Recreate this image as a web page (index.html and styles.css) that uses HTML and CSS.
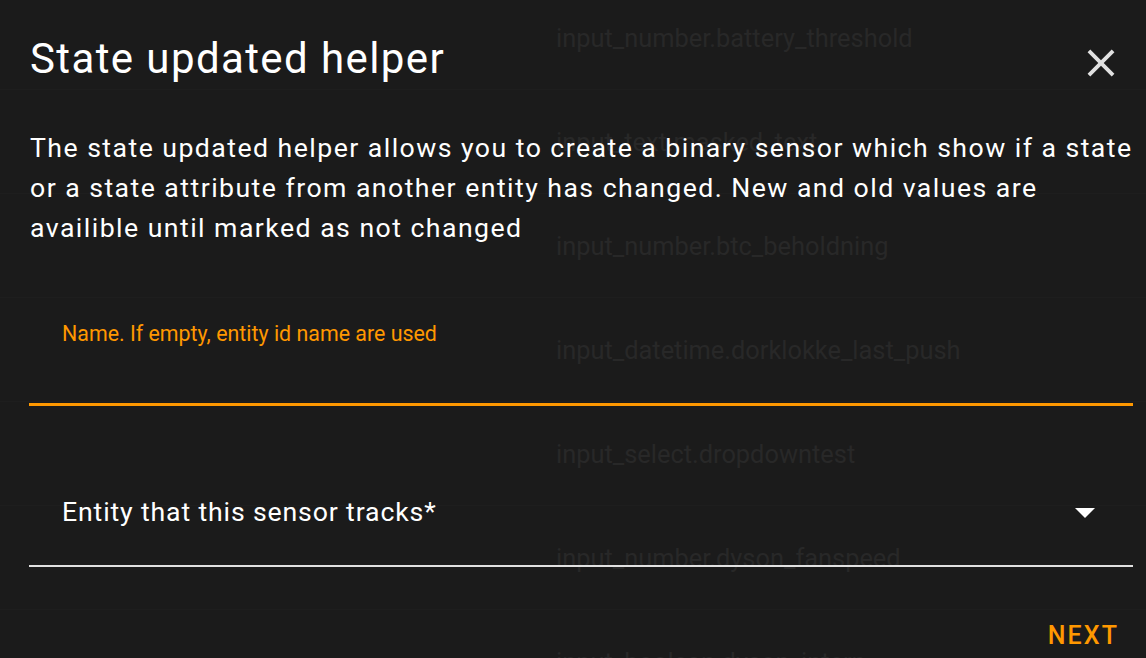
FILE: index.html
```html
<!DOCTYPE html>
<html lang="en">
<head>
<meta charset="utf-8">
<title>State updated helper</title>
<link rel="stylesheet" href="styles.css">
</head>
<body>
<ul class="ghost-list">
  <li class="ghost-row">input_number.battery_threshold</li>
  <li class="ghost-row">input_text.masked_text</li>
  <li class="ghost-row">input_number.btc_beholdning</li>
  <li class="ghost-row">input_datetime.dorklokke_last_push</li>
  <li class="ghost-row">input_select.dropdowntest</li>
  <li class="ghost-row">input_number.dyson_fanspeed</li>
  <li class="ghost-row">input_boolean.dyson_intern</li>
</ul>
<div class="dialog">
  <div class="header">
    <h1 class="title">State updated helper</h1>
    <button class="close" aria-label="Close">
      <svg viewBox="0 0 24 24" width="46" height="46"><path fill="currentColor" d="M19,6.41L17.59,5L12,10.59L6.41,5L5,6.41L10.59,12L5,17.59L6.41,19L12,13.41L17.59,19L19,17.59L13.41,12L19,6.41Z"/></svg>
    </button>
  </div>
  <p class="desc">The state updated helper allows you to create a binary sensor which show if a state or a state attribute from another entity has changed. New and old values are availible until marked as not changed</p>
  <div class="field">
    <div class="field-label">Name. If empty, entity id name are used</div>
    <div class="field-input"></div>
    <div class="field-line"></div>
  </div>
  <div class="select">
    <div class="select-row">
      <span class="select-label">Entity that this sensor tracks*</span>
      <svg class="arrow" viewBox="0 0 24 24" width="48" height="48"><path fill="currentColor" d="M7,10L12,15L17,10H7Z"/></svg>
    </div>
    <div class="select-line"></div>
  </div>
  <div class="footer">
    <button class="next">NEXT</button>
  </div>
</div>
</body>
</html>
```

FILE: styles.css
```css
* { box-sizing: border-box; }
html, body { margin: 0; padding: 0; }
body {
  width: 1146px;
  height: 658px;
  overflow: hidden;
  background: #1b1b1b;
  font-family: Roboto, "Noto Sans", "Liberation Sans", sans-serif;
  color: #e1e1e1;
  position: relative;
}
.ghost-list {
  list-style: none;
  margin: 0;
  padding: 0;
  height: 658px;
  overflow: hidden;
}
.ghost-row {
  height: 104px;
  display: flex;
  align-items: center;
  padding-left: 556px;
  font-size: 25.4px;
  color: #282828;
  border-bottom: 1px solid #1e1e1e;
}
.ghost-row:first-child {
  margin-top: -14px;
}
.dialog {
  position: absolute;
  inset: 0;
  padding: 0 13px 0 29px;
  display: flex;
  flex-direction: column;
}
.header {
  display: flex;
  align-items: flex-start;
  justify-content: space-between;
  padding-top: 35px;
}
.title {
  margin: 0;
  font-size: 42px;
  line-height: 48px;
  font-weight: 400;
  letter-spacing: 1.4px;
  color: #ffffff;
  padding-left: 1px;
}
.close {
  background: none;
  border: 0;
  padding: 0;
  margin: 5px 9px 0 0;
  color: #e1e1e1;
  display: block;
  width: 46px;
  height: 46px;
}
.close svg { display: block; }
.desc {
  margin: 42px -13px 0 0;
  font-size: 26.67px;
  line-height: 40px;
  letter-spacing: 1.45px;
  padding-left: 1px;
  color: #ffffff;
}
.field {
  margin-top: 73px;
}
.field-label {
  padding-left: 33px;
  font-size: 21.4px;
  line-height: 26px;
  color: #ff9800;
}
.field-input { height: 56px; }
.field-line {
  height: 3px;
  background: #ff9800;
}
.select {
  margin-top: 82px;
}
.select-row {
  display: flex;
  align-items: center;
  justify-content: space-between;
  height: 48px;
  padding-left: 33px;
  padding-right: 24px;
}
.select-label {
  font-size: 26.67px;
  line-height: 32px;
  letter-spacing: 0.85px;
  color: #ffffff;
}
.arrow { color: #ffffff; display: block; }
.select-line {
  margin-top: 29px;
  height: 2px;
  background: #e1e1e1;
}
.footer {
  display: flex;
  justify-content: flex-end;
  margin-top: 54px;
}
.next {
  background: none;
  border: 0;
  padding: 0;
  margin-right: 14px;
  font-family: Roboto, "Noto Sans", "Liberation Sans", sans-serif;
  font-size: 25px;
  line-height: 30px;
  font-weight: 500;
  letter-spacing: 2.1px;
  color: #ff9800;
}
```
